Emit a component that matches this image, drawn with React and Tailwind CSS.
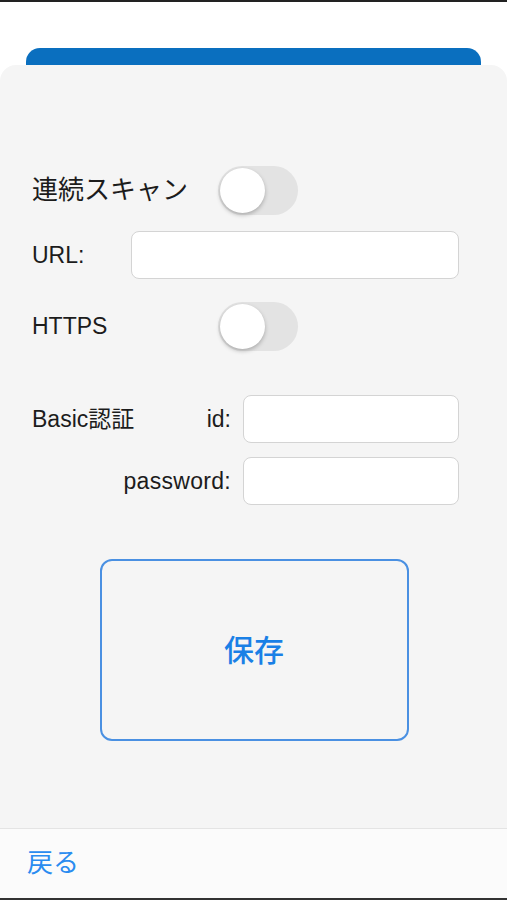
import React from 'react';

const Toggle = () => (
  <div className="relative h-[49px] w-[80px] rounded-full bg-[#e3e3e3]">
    <div className="absolute left-[2px] top-[2px] h-[45px] w-[45px] rounded-full bg-white shadow-[0_2px_4px_rgba(0,0,0,0.25)]" />
  </div>
);

const Field = ({ className }) => (
  <div className={`h-[48px] rounded-[8px] border border-[#d4d4d4] bg-white ${className}`} />
);

const App = () => {
  return (
    <div
      className="flex h-[900px] w-full flex-col bg-white text-[#1c1c1c]"
      style={{ fontFamily: '"Liberation Sans", "Noto Sans CJK JP", sans-serif' }}
    >
      <div className="h-[2px] bg-[#222]" />

      <div className="pt-[46px]">
        <div className="mx-[26px] h-[17px] rounded-t-[14px] bg-[#0a6fbf]" />
      </div>

      <main className="flex flex-1 flex-col rounded-t-[16px] bg-[#f5f5f5] pt-[101px]">
        <div className="flex items-center pl-[32px]">
          <span className="w-[186px] text-[26px]">連続スキャン</span>
          <Toggle />
        </div>

        <div className="mt-[16px] flex items-center pl-[32px] pr-[48px]">
          <span className="w-[99px] text-[23px]">URL:</span>
          <Field className="flex-1" />
        </div>

        <div className="mt-[23px] flex items-center pl-[32px]">
          <span className="w-[186px] text-[23px]">HTTPS</span>
          <Toggle />
        </div>

        <div className="mt-[44px] flex items-center pl-[32px] pr-[48px]">
          <span className="text-[23px]">Basic認証</span>
          <span className="flex-1 pr-[12px] text-right text-[23px]">id:</span>
          <Field className="w-[216px]" />
        </div>

        <div className="mt-[14px] flex items-center pl-[32px] pr-[48px]">
          <span className="flex-1 pr-[12px] text-right text-[23px] tracking-[0.3px]">password:</span>
          <Field className="w-[216px]" />
        </div>

        <div className="mt-[54px] flex justify-center">
          <button className="ml-[1px] flex h-[182px] w-[309px] items-center justify-center rounded-[12px] border-2 border-[#4a90e2] text-[30px] font-medium text-[#1a80e6]">
            保存
          </button>
        </div>
      </main>

      <footer className="flex h-[70px] items-center border-t border-[#e4e4e4] bg-[#fbfbfb] pl-[27px]">
        <span className="text-[26px] text-[#2a8cf0]">戻る</span>
      </footer>

      <div className="h-[2px] bg-[#333]" />
    </div>
  );
};

export default App;
